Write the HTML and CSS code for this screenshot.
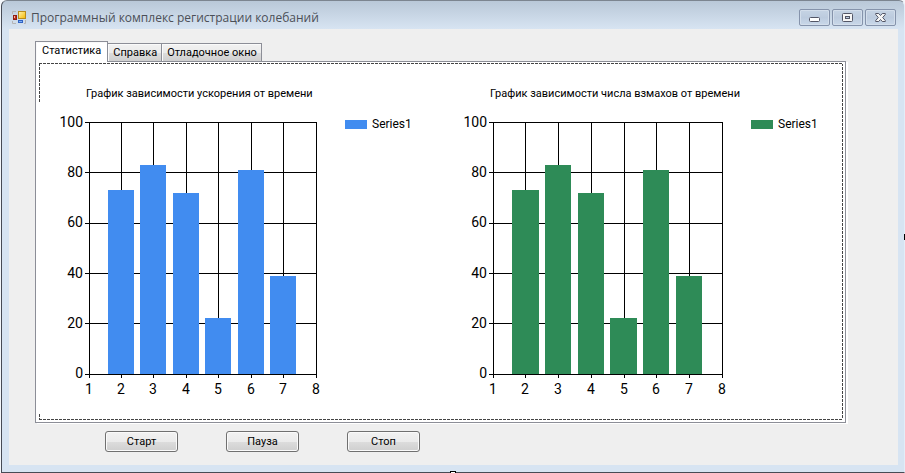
FILE: index.html
```html
<!DOCTYPE html>
<html lang="ru">
<head>
<meta charset="utf-8">
<title>Программный комплекс регистрации колебаний</title>
<link rel="stylesheet" href="styles.css">
</head>
<body>
<div class="window">
  <header class="titlebar">
    <svg class="app-icon" width="14" height="14" viewBox="0 0 14 14" aria-hidden="true">
      <defs>
        <linearGradient id="gold" x1="0" y1="0" x2="1" y2="1"><stop offset="0" stop-color="#fff3b0"/><stop offset="1" stop-color="#f5b800"/></linearGradient>
      </defs>
      <path d="M.5 3V.5H4M.5 10v2.500H4M13.500 9v3.500H12" fill="none" stroke="#b4b4b4"/>
      <rect x="6.500" y=".5" width="7" height="7" fill="url(#gold)" stroke="#b88a1c"/>
      <rect x="1.500" y="4.500" width="3" height="4" fill="#c22f1e" stroke="#8e1f14"/>
      <rect x="2" y="5" width="1" height="2" fill="#f4b3a4"/>
      <rect x="6.500" y="9.500" width="4" height="2" fill="#7fb2f5" stroke="#2f62c4"/>
    </svg>
    <h1 class="title">Программный комплекс регистрации колебаний</h1>
    <div class="window-controls">
      <button class="control" type="button" aria-label="Свернуть">
        <svg width="12" height="11" viewBox="0 0 12 11"><rect x=".5" y="5.500" width="10" height="4" rx="1" fill="#fff" stroke="#535666"/></svg>
      </button>
      <button class="control" type="button" aria-label="Развернуть">
        <svg width="12" height="11" viewBox="0 0 12 11"><rect x=".5" y="1.500" width="10" height="8" rx="1" fill="#f6f6f6" stroke="#535666"/><rect x="3.500" y="4.500" width="4" height="2" fill="#b9c9de" stroke="#535666"/></svg>
      </button>
      <button class="control" type="button" aria-label="Закрыть">
        <svg width="12" height="11" viewBox="0 0 12 11"><path d="M.7 1.500h3L5.500 3.500 7.300 1.500h3v1L7.700 5.500l2.600 3v1h-3L5.500 7.500 3.700 9.500h-3v-1l2.600-3L.7 2.500z" fill="#f6f6f6" stroke="#535666" stroke-linejoin="round"/></svg>
      </button>
    </div>
  </header>
  <main class="client">
    <div class="tabs" role="tablist">
      <button class="tab tab-active" id="tab-stats" type="button" role="tab" aria-selected="true" aria-controls="stats">Статистика</button>
      <button class="tab" type="button" role="tab" aria-selected="false">Справка</button>
      <button class="tab" type="button" role="tab" aria-selected="false">Отладочное окно</button>
    </div>
    <section class="page" id="stats" role="tabpanel" aria-labelledby="tab-stats">
      <div class="charts">
        <figure class="chart chart-blue">
          <figcaption class="chart-title">График зависимости ускорения от времени</figcaption>
          <div class="chart-body">
            <svg class="plot" width="276" height="292" viewBox="0 0 276 292">
              <path class="lines" d="M27 12h232v1H27zM27 62h232v1H27zM27 113h232v1H27zM27 163h232v1H27zM27 213h232v1H27zM27 264h232v1H27zM31 12h1v256h-1zM63 12h1v256h-1zM95 12h1v256h-1zM128 12h1v256h-1zM160 12h1v256h-1zM193 12h1v256h-1zM225 12h1v256h-1zM258 12h1v256h-1z"/>
              <path class="bars" d="M50 80h26v184H50zM82 55h26v209H82zM115 83h26v181h-26zM147 208h26v56h-26zM180 60h26v204h-26zM212 166h26v98h-26z"/>
              <g class="y-labels"><text x="25" y="17">100</text><text x="25" y="67">80</text><text x="25" y="117">60</text><text x="25" y="168">40</text><text x="25" y="218">20</text><text x="25" y="268">0</text></g>
              <g class="x-labels"><text x="31" y="284">1</text><text x="63" y="284">2</text><text x="95" y="284">3</text><text x="128" y="284">4</text><text x="160" y="284">5</text><text x="193" y="284">6</text><text x="225" y="284">7</text><text x="258" y="284">8</text></g>
            </svg>
            <div class="legend"><span class="swatch"></span>Series1</div>
          </div>
        </figure>
        <figure class="chart chart-green">
          <figcaption class="chart-title">График зависимости числа взмахов от времени</figcaption>
          <div class="chart-body">
            <svg class="plot" width="278" height="292" viewBox="0 0 278 292">
              <path class="lines" d="M27 12h233v1H27zM27 62h233v1H27zM27 113h233v1H27zM27 163h233v1H27zM27 213h233v1H27zM27 264h233v1H27zM31 12h1v256h-1zM63 12h1v256h-1zM96 12h1v256h-1zM129 12h1v256h-1zM162 12h1v256h-1zM194 12h1v256h-1zM227 12h1v256h-1zM260 12h1v256h-1z"/>
              <path class="bars" d="M50 80h27v184H50zM83 55h26v209H83zM116 83h26v181h-26zM148 208h27v56h-27zM181 60h26v204h-26zM214 166h26v98h-26z"/>
              <g class="y-labels"><text x="25" y="17">100</text><text x="25" y="67">80</text><text x="25" y="117">60</text><text x="25" y="168">40</text><text x="25" y="218">20</text><text x="25" y="268">0</text></g>
              <g class="x-labels"><text x="31" y="284">1</text><text x="63" y="284">2</text><text x="96" y="284">3</text><text x="129" y="284">4</text><text x="162" y="284">5</text><text x="194" y="284">6</text><text x="227" y="284">7</text><text x="260" y="284">8</text></g>
            </svg>
            <div class="legend"><span class="swatch"></span>Series1</div>
          </div>
        </figure>
      </div>
    </section>
    <div class="actions">
      <button class="action" type="button">Старт</button>
      <button class="action" type="button">Пауза</button>
      <button class="action" type="button">Стоп</button>
    </div>
  </main>
  <span class="handle handle-right"></span>
  <span class="handle handle-bottom"></span>
</div>
</body>
</html>
```
FILE: styles.css
```css
* { box-sizing: border-box; }

html { overflow: hidden; }

body {
  margin: 0;
  background: #f4f7fb;
  font: 11px/16px Roboto, "Liberation Sans", sans-serif;
  color: #000;
}

button { margin: 0; padding: 0; font: inherit; color: inherit; }

.window {
  position: relative;
  min-height: 100vh;
  display: flex;
  flex-direction: column;
  margin-left: 1px;
  padding: 0 6px 7px 7px;
  border: 1px solid #474b55;
  border-right: 1px solid #e3edf8;
  border-top-color: #7c8590;
  border-radius: 6px 6px 0 0;
  background: linear-gradient(#b9c8d8, #d7e4f2 28px);
}

.titlebar {
  display: flex;
  height: 28px;
  padding: 0 2px 0 3px;
}

.app-icon { margin-top: 10px; }

.title {
  flex: 1;
  margin: 8px 0 0 5px;
  font: 12px/18px "Open Sans", "Noto Sans", sans-serif;
  color: #4b4f57;
}

.window-controls { display: flex; gap: 2px; margin-top: 8px; }

.control {
  display: flex;
  align-items: center;
  justify-content: center;
  width: 31px;
  height: 17px;
  border: 1px solid #8593ab;
  border-radius: 2px;
  background: linear-gradient(#c6d4e4, #bccbde 50%, #c9d8e9);
  box-shadow: inset 0 0 0 1px #d3deeb;
}

.client {
  flex: 1;
  padding: 12px 52px 12px 26px;
  background: #efefef;
}

.tabs { display: flex; align-items: flex-end; height: 20px; }

.tab {
  height: 18px;
  padding: 0 4px;
  border: 1px solid #8c8e97;
  border-width: 1px 1px 0 0;
  background: linear-gradient(#f2f2f2, #ebebeb 50%, #dddddd 50%, #cfcfcf);
  box-shadow: inset 1px 1px #fafafa;
}

.tab + .tab { padding-left: 5px; }

.tab-active {
  position: relative;
  height: 21px;
  margin-bottom: -1px;
  padding: 0 6px 2px 6px;
  border-left-width: 1px;
  background: #fff;
}

.page {
  padding: 1px 2px 2px 3px;
  border: 1px solid #8c8e97;
  box-shadow: 2px 1px #fff;
  background: #fff;
}

.charts {
  display: grid;
  grid-template-columns: 1fr 1fr;
  height: 357px;
  padding-top: 22px;
  --h: repeating-linear-gradient(90deg, #444 0 3px, #fff 3px 4px);
  --v: repeating-linear-gradient(#444 0 3px, #fff 3px 4px);
  background:
    var(--h) 0 0 / 100% 1px no-repeat,
    var(--h) 0 100% / 100% 1px no-repeat,
    var(--v) 100% 0 / 1px 100% no-repeat,
    var(--v) 0 0 / 1px 40px no-repeat,
    var(--v) 0 100% / 1px 6px no-repeat;
}

.chart { margin: 0; padding-left: 19px; }
.chart-green { padding-left: 21px; }
.chart-title { padding-left: 28px; height: 25px; line-height: 18px; }
.chart-body { display: flex; }
.chart-blue { --series: #418cf0; }
.chart-green { --series: #2e8b57; }

.plot {
  flex: none;
  font-size: 14px;
  shape-rendering: crispEdges;
}

.bars { fill: var(--series); }
.y-labels { text-anchor: end; }
.x-labels { text-anchor: middle; }

.legend {
  display: flex;
  align-items: center;
  gap: 5px;
  height: 16px;
  margin: 6px 0 0 11px;
  font-size: 12px;
}

.swatch { width: 22px; height: 9px; background: var(--series); }

.actions { display: flex; gap: 48px; padding: 8px 0 0 70px; }

.action {
  width: 73px;
  height: 21px;
  border: 1px solid #707070;
  border-radius: 3px;
  background: linear-gradient(#f2f2f2, #ebebeb 50%, #dddddd 50%, #cfcfcf);
  box-shadow: inset 0 0 0 1px #fafafa;
}

.handle {
  position: absolute;
  width: 6px;
  height: 6px;
  border: 1px solid #000;
  background: #fff;
}

.handle-right { right: -6px; top: 50%; margin-top: -3px; }
.handle-bottom { bottom: -5px; left: 50%; margin-left: -3px; }
```
